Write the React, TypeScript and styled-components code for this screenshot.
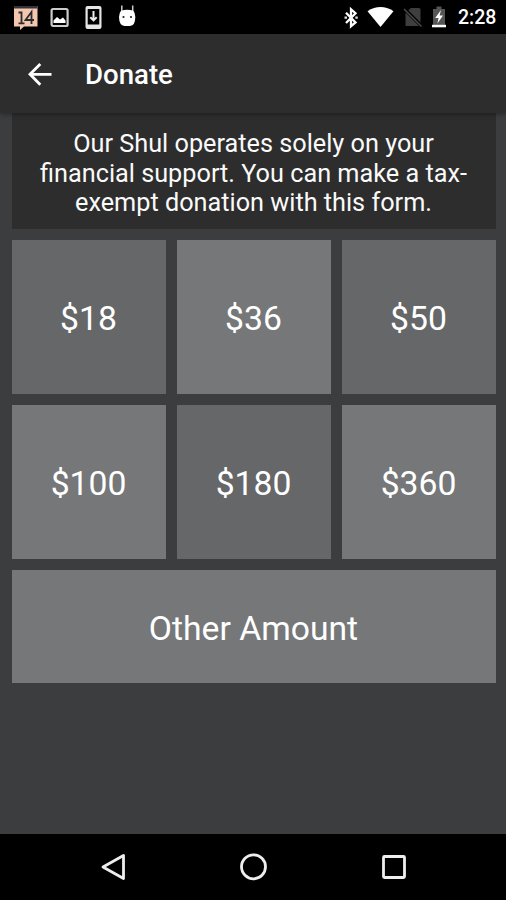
import React from "react";
import styled, { createGlobalStyle } from "styled-components";

const GlobalStyle = createGlobalStyle`
  * { box-sizing: border-box; }
  body { margin: 0; background: #3c3d3f; }
`;

const Screen = styled.div`
  width: 506px;
  height: 900px;
  display: flex;
  flex-direction: column;
  overflow: hidden;
  background: #3c3d3f;
  color: #fafafa;
  font-family: Roboto, "Liberation Sans", sans-serif;
`;

const StatusBar = styled.div`
  height: 34px;
  flex: none;
  display: flex;
  justify-content: space-between;
  padding: 0 10px 0 12px;
  background: #000;
  svg { display: block; }
`;

const IconGroup = styled.div<{ $gap: number }>`
  display: flex;
  align-items: center;
  gap: ${(p) => p.$gap}px;
`;

const Clock = styled.time`
  width: 38px;
  margin-left: 3px;
  padding-top: 2px;
  font-size: 19.5px;
  line-height: 34px;
  font-weight: 500;
  white-space: nowrap;
  color: #fff;
`;

const AppBar = styled.header`
  height: 79px;
  flex: none;
  display: flex;
  align-items: center;
  gap: 32px;
  padding: 0 0 0 27px;
  background: #2d2d2d;
  box-shadow: 0 1px 5px rgba(0, 0, 0, 0.4);
  z-index: 1;
`;

const BackButton = styled.button`
  width: 26px;
  height: 26px;
  padding: 0;
  border: 0;
  background: none;
  svg { display: block; }
`;

const Title = styled.h1`
  margin: 3px 0 0;
  font-size: 27.6px;
  line-height: 32px;
  font-weight: 500;
  color: #fff;
`;

const Content = styled.main`
  flex: 1;
  display: flex;
  flex-direction: column;
  gap: 11px;
  padding: 0 10.5px 0 11.5px;
`;

const Notice = styled.p`
  height: 115.5px;
  margin: 0;
  padding-top: 16px;
  background: #2d2d2d;
  font-size: 25.25px;
  line-height: 29.6px;
  text-align: center;
  white-space: pre-line;
`;

const AmountGrid = styled.div`
  display: grid;
  grid-template-columns: repeat(3, 1fr);
  grid-auto-rows: 154px;
  gap: 11px;
`;

const AmountButton = styled.button<{ $light?: boolean }>`
  padding: 4px 0 0;
  border: 0;
  background: ${(p) => (p.$light ? "#767779" : "#666769")};
  color: #fff;
  font: 400 33.7px Roboto, "Liberation Sans", sans-serif;
`;

const OtherButton = styled(AmountButton)`
  height: 113px;
`;

const NavBar = styled.nav`
  height: 66.5px;
  flex: none;
  display: flex;
  justify-content: space-between;
  align-items: center;
  padding: 0 98px 0 99px;
  background: #000;
  svg { display: block; }
`;

const amounts = [
  { label: "$18" },
  { label: "$36", light: true },
  { label: "$50" },
  { label: "$100", light: true },
  { label: "$180" },
  { label: "$360", light: true },
];

const CalendarIcon = () => (
  <svg width="27" height="34" viewBox="0 0 27 34">
    <path d="M2 6h23.5v20.5H12l-4 3.5v-3.5H2z" fill="#f4c6ab" />
    <path d="M2 6h23.5v2.5H2z" fill="#30343c" />
    <path d="M6.5 12.5h3v11M6.5 23.3h6M19.5 24v-12l-6 8h8.5" fill="none" stroke="#272c34" strokeWidth="1.8" />
  </svg>
);

const PictureIcon = () => (
  <svg width="20" height="34" viewBox="0 0 20 34">
    <rect x="1.6" y="9" width="16" height="17" rx="1.5" fill="none" stroke="#ccc" strokeWidth="2.2" />
    <path d="M3.5 23v-2.5l3.5-3.5 3 2.5 3-2 2.5 3V23z" fill="#fff" />
  </svg>
);

const DownloadIcon = () => (
  <svg width="18" height="34" viewBox="0 0 18 34">
    <path d="M2.5 6h12A2 2 0 0 1 16.500 8v19a2 2 0 0 1-2 2h-12a2 2 0 0 1-2-2V8a2 2 0 0 1 2-2z" fill="#e6e6e6" />
    <path d="M2.700 9h11.600v15.500H2.700z" fill="#000" />
    <path d="M8.500 11v9M5.300 17.200 8.500 20.400l3.200-3.200" fill="none" stroke="#eee" strokeWidth="2" />
  </svg>
);

const AndroidIcon = () => (
  <svg width="18" height="34" viewBox="0 0 18 34">
    <path d="M3.800 5.500v6M14.700 5.500v6" stroke="#ccc" strokeWidth="1.500" />
    <path d="M3 10.800q6.200-2 12.400 0 1.800 2.200 1.900 6.200-.1 8.700-5.300 8.900H6.500Q1.200 25.700 1 17q.1-4 2-6.200z" fill="#fff" />
    <circle cx="5.500" cy="17" r="1.100" fill="#222" />
    <circle cx="13" cy="17" r="1.100" fill="#222" />
  </svg>
);

const BluetoothIcon = () => (
  <svg width="14" height="34" viewBox="0 0 14 34">
    <path d="m2 12.700 9.500 9.800L7 26.200V9.300l4.500 3.900L2 23" fill="none" stroke="#fff" strokeWidth="2.300" />
    <path d="M.5 16.500h2.500v2.300H.5zM11.300 16.500h2.500v2.300h-2.500z" fill="#ddd" />
  </svg>
);

const WifiIcon = () => (
  <svg width="27" height="34" viewBox="0 0 27 34">
    <path d="M.5 11.200Q13.500 2.800 26.500 11.200L13.500 27z" fill="#fff" />
  </svg>
);

const NoSimIcon = () => (
  <svg width="20" height="34" viewBox="0 0 20 34">
    <path d="M7.800 8H16a1.500 1.500 0 0 1 1.500 1.500V26h-15V13z" fill="#3e3e3e" />
    <path d="m1 8.500 18 18" stroke="#000" strokeWidth="3.600" />
    <path d="m1 9 17.500 17.500" stroke="#4c4c4c" strokeWidth="1.500" />
  </svg>
);

const BatteryIcon = () => (
  <svg width="14" height="34" viewBox="0 0 14 34">
    <path d="M4.500 6.500h5V9H13v18H1V9h3.500z" fill="#555" />
    <path d="M0 24.800h14V27.300H0z" fill="#fff" />
    <path d="M9 10 3.200 18h3.400l-1.200 5.500 5.600-8H7.600z" fill="#fff" />
  </svg>
);

export default function App() {
  return (
    <>
      <GlobalStyle />
      <Screen>
        <StatusBar>
          <IconGroup $gap={15}>
            <IconGroup $gap={11}>
              <CalendarIcon />
              <PictureIcon />
            </IconGroup>
            <DownloadIcon />
            <AndroidIcon />
          </IconGroup>
          <IconGroup $gap={9}>
            <BluetoothIcon />
            <WifiIcon />
            <NoSimIcon />
            <BatteryIcon />
            <Clock>2:28</Clock>
          </IconGroup>
        </StatusBar>
        <AppBar>
          <BackButton aria-label="Back">
            <svg width="26" height="26" viewBox="0 0 26 26">
              <path d="M24.500 13.300H3.500M13.300 2.900 3 13.300l10.300 10.400" fill="none" stroke="#fff" strokeWidth="2.800" />
            </svg>
          </BackButton>
          <Title>Donate</Title>
        </AppBar>
        <Content>
          <Notice>
            {"Our Shul operates solely on your\nfinancial support. You can make a tax-\nexempt donation with this form."}
          </Notice>
          <AmountGrid>
            {amounts.map((a) => (
              <AmountButton key={a.label} $light={a.light}>
                {a.label}
              </AmountButton>
            ))}
          </AmountGrid>
          <OtherButton $light>Other Amount</OtherButton>
        </Content>
        <NavBar>
          <svg width="28" height="30" viewBox="0 0 28 30">
            <path d="M24.500 3.500v23L4 15z" fill="none" stroke="#eee" strokeWidth="2.800" strokeLinejoin="round" />
          </svg>
          <svg width="28" height="30" viewBox="0 0 28 30">
            <circle cx="13.500" cy="14.800" r="12" fill="none" stroke="#eee" strokeWidth="2.800" />
          </svg>
          <svg width="28" height="30" viewBox="0 0 28 30">
            <rect x="3.500" y="4.500" width="21" height="21" rx="1" fill="none" stroke="#eee" strokeWidth="2.800" />
          </svg>
        </NavBar>
      </Screen>
    </>
  );
}
